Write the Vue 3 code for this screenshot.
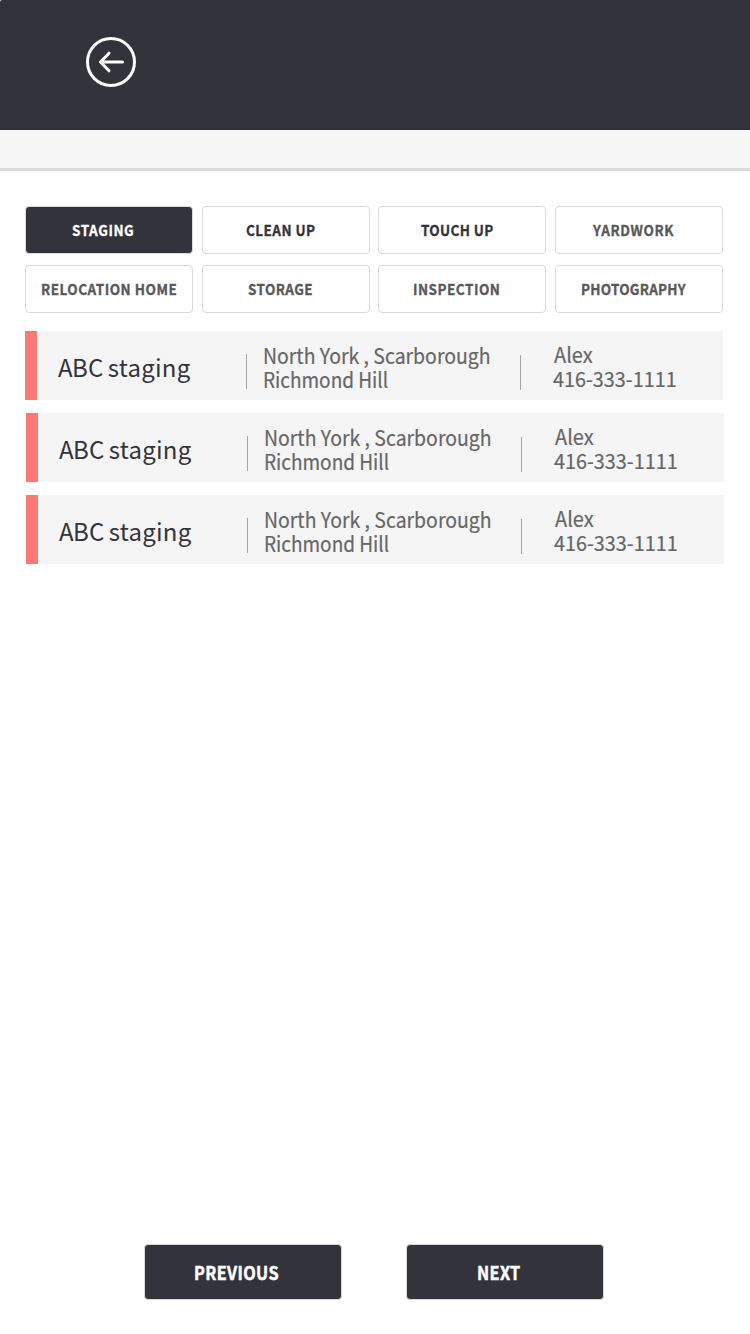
<script setup>
const tabs = [
  { label: 'STAGING', tone: 'active' },
  { label: 'CLEAN UP', tone: 'strong' },
  { label: 'TOUCH UP', tone: 'strong' },
  { label: 'YARDWORK', tone: '' },
  { label: 'RELOCATION HOME', tone: '' },
  { label: 'STORAGE', tone: '' },
  { label: 'INSPECTION', tone: '' },
  { label: 'PHOTOGRAPHY', tone: '' },
]
const slug = (s) => s.toLowerCase().replace(' ', '-')
const vendors = [1, 2, 3].map((id) => ({
  id,
  name: 'ABC staging',
  areas: ['North York , Scarborough', 'Richmond Hill'],
  contact: 'Alex',
  phone: '416-333-1111',
}))
</script>

<template>
  <div class="screen">
    <header class="topbar">
      <button class="back" aria-label="Back">
        <svg width="50" height="50" viewBox="0 0 50 50" fill="none" stroke="#fff" stroke-width="3" stroke-linecap="round" stroke-linejoin="round">
          <circle cx="25" cy="25" r="23.5" />
          <path d="M36.5 25H14.5M23 16.2L14.5 25L23 33.8" />
        </svg>
      </button>
    </header>
    <div class="strip"></div>
    <nav class="tabs">
      <button v-for="t in tabs" :key="t.label" class="tab" :class="[t.tone, slug(t.label)]">
        <span>{{ t.label }}</span>
      </button>
    </nav>
    <main class="list">
      <article v-for="v in vendors" :key="v.id" class="vendor">
        <h2 class="name">{{ v.name }}</h2>
        <div class="areas">
          <p class="first">{{ v.areas[0] }}</p>
          <p class="second">{{ v.areas[1] }}</p>
        </div>
        <div class="contact">
          <p class="person">{{ v.contact }}</p>
          <p class="phone">{{ v.phone }}</p>
        </div>
      </article>
    </main>
    <footer class="actions">
      <button class="action previous"><span>PREVIOUS</span></button>
      <button class="action next"><span>NEXT</span></button>
    </footer>
  </div>
</template>

<style>
body {
  background: #fff;
}
</style>

<style scoped>
.screen {
  width: 750px;
  height: 1334px;
  display: flex;
  flex-direction: column;
  overflow: hidden;
  background: #fff;
  font-family: "Noto Sans CJK SC", "Noto Sans", sans-serif;
}
button {
  font-family: inherit;
  text-align: left;
  white-space: nowrap;
}
.topbar {
  box-sizing: border-box;
  flex: none;
  height: 130px;
  padding: 37px 0 0 86px;
  background: #33333b;
  border-bottom: 2px solid #2f2f38;
  border-top-left-radius: 2px;
}
.back {
  display: block;
  width: 50px;
  height: 50px;
  padding: 0;
  border: 0;
  background: none;
}
.back svg {
  display: block;
}
.strip {
  flex: none;
  height: 38px;
  background: #f7f7f7;
  border-bottom: 3px solid #dcdcdc;
}
.tabs {
  display: grid;
  grid-template-columns: repeat(4, 168px);
  gap: 11px 8.6px;
  margin: 35px 0 0 25px;
}
.tab {
  box-sizing: border-box;
  height: 48px;
  padding: 0 0 0 15px;
  border: 1px solid #dadada;
  border-radius: 4px;
  background: #fff;
  color: #585858;
  font-size: 15px;
  font-weight: 700;
  line-height: 46px;
  letter-spacing: 0.57px;
  -webkit-text-stroke: 0.3px currentColor;
}
.tab span,
.action span {
  display: block;
  width: max-content;
  transform: scaleX(0.9);
  transform-origin: 0 50%;
}
.strong {
  color: #33333b;
}
.active {
  color: #fff;
  background: #33333b;
}
.staging { padding-left: 46px; letter-spacing: 0.63px; }
.clean-up { padding-left: 43px; letter-spacing: 0.5px; }
.touch-up { padding-left: 42px; letter-spacing: 0.38px; }
.yardwork { padding-left: 37px; letter-spacing: 0.7px; }
.storage { padding-left: 45px; letter-spacing: 0.45px; }
.inspection { padding-left: 34px; }
.photography { padding-left: 25px; letter-spacing: 0.28px; }
.list {
  display: flex;
  flex-direction: column;
  gap: 13px;
  margin: 18px 0 0 25px;
}
.vendor {
  box-sizing: border-box;
  display: flex;
  width: 698px;
  height: 69px;
  border-left: 12px solid #ff7878;
  background: #f5f5f5;
  white-space: nowrap;
}
.vendor + .vendor {
  margin-left: 1px;
}
.name {
  box-sizing: border-box;
  width: 209px;
  margin: 0;
  padding-left: 21px;
  color: #33333b;
  font-size: 24px;
  font-weight: 400;
  line-height: 71px;
  letter-spacing: 0.25px;
  word-spacing: -1.5px;
}
.name::first-letter {
  letter-spacing: -0.6px;
}
.areas,
.contact {
  box-sizing: border-box;
  color: #666;
  font-size: 21px;
  line-height: 24px;
  background: linear-gradient(#a5a5a5, #a5a5a5) no-repeat;
}
.areas {
  width: 274px;
  padding: 12px 0 0 17px;
  background-size: 1px 35px;
  background-position: 0 23px;
}
.contact {
  padding: 11px 0 0 33px;
  background-size: 1px 35px;
  background-position: 0 24px;
}
p {
  width: max-content;
  margin: 0;
  transform-origin: 0 50%;
  -webkit-text-stroke: 0.2px currentColor;
}
.first { transform: scaleX(0.925); }
.second { transform: scaleX(0.905); }
.person { transform: translateX(1px) scaleX(0.95); }
.phone { transform: scaleX(0.943); }
.actions {
  display: flex;
  gap: 64px;
  margin: auto 0 34px 144px;
}
.action {
  box-sizing: border-box;
  width: 198px;
  height: 56px;
  border: 1px solid #d8d8d8;
  border-radius: 4px;
  background: #33333b;
  color: #fff;
  font-size: 18px;
  font-weight: 700;
  line-height: 54px;
  letter-spacing: 0.45px;
  -webkit-text-stroke: 0.5px currentColor;
  padding: 0 0 0 49px;
}
.next {
  padding-left: 70px;
}
</style>
